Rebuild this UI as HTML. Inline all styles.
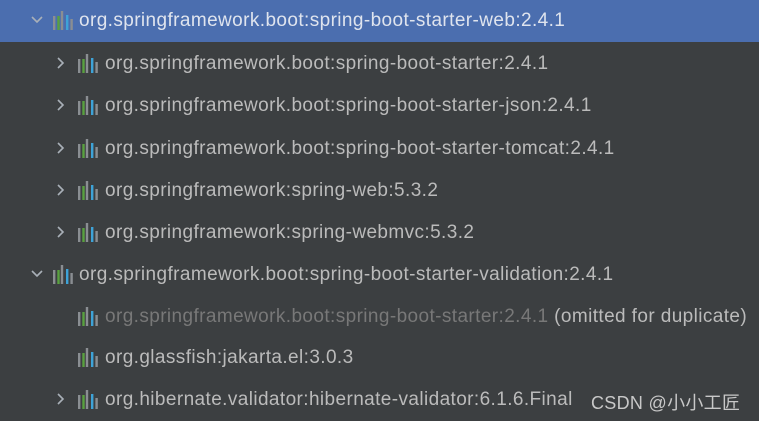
<!DOCTYPE html>
<html><head><style>
body{margin:0;width:759px;height:419px;background:#3c3f41;overflow:hidden;font-family:"Liberation Sans","Noto Sans CJK SC",sans-serif;}
.r{position:absolute;left:0;width:759px;height:42px;color:#bbbbbb;font-size:19px;letter-spacing:0.4px;}
.r.sel{background:#4b6eaf;color:#dfe4ee;top:0;}
.t{position:absolute;top:10px;white-space:nowrap;}
.ic{position:absolute;top:11px;width:20px;height:19px;}
.ch{position:absolute;top:14px;width:12px;height:12px;}
.dim{color:#787878}
.wm{position:absolute;left:591px;top:389px;color:#c8c8c8;font-size:18px;white-space:nowrap;letter-spacing:0.3px}
</style></head><body>
<svg width="0" height="0" style="position:absolute"><defs>
<g id="i"><rect x="0" y="5" width="2.4" height="14" fill="#8a8e92"/><rect x="4.3" y="5" width="2.4" height="14" fill="#59a13f"/><rect x="7.8" y="0" width="2.4" height="19" fill="#8a8e92"/><rect x="13" y="4" width="2.4" height="15" fill="#3ea3d8"/><rect x="17.4" y="8" width="2.4" height="11" fill="#8a8e92"/></g>
<path id="d" d="M1 3 L6 8 L11 3" fill="none" stroke="#a9b0b8" stroke-width="1.6"/>
<path id="rt" d="M3 1 L8 6 L3 11" fill="none" stroke="#a9b0b8" stroke-width="1.6"/>
</defs></svg>

<div class="r sel"><svg class="ch" style="left:31px"><use href="#d"/></svg><svg class="ic" style="left:53px"><use href="#i"/></svg><span class="t" style="left:79px">org.springframework.boot:spring-boot-starter-web:2.4.1</span></div>

<div class="r" style="top:43px"><svg class="ch" style="left:55px"><use href="#rt"/></svg><svg class="ic" style="left:78px"><use href="#i"/></svg><span class="t" style="left:105px">org.springframework.boot:spring-boot-starter:2.4.1</span></div>
<div class="r" style="top:85px"><svg class="ch" style="left:55px"><use href="#rt"/></svg><svg class="ic" style="left:78px"><use href="#i"/></svg><span class="t" style="left:105px">org.springframework.boot:spring-boot-starter-json:2.4.1</span></div>
<div class="r" style="top:128px"><svg class="ch" style="left:55px"><use href="#rt"/></svg><svg class="ic" style="left:78px"><use href="#i"/></svg><span class="t" style="left:105px">org.springframework.boot:spring-boot-starter-tomcat:2.4.1</span></div>
<div class="r" style="top:170px"><svg class="ch" style="left:55px"><use href="#rt"/></svg><svg class="ic" style="left:78px"><use href="#i"/></svg><span class="t" style="left:105px">org.springframework:spring-web:5.3.2</span></div>
<div class="r" style="top:212px"><svg class="ch" style="left:55px"><use href="#rt"/></svg><svg class="ic" style="left:78px"><use href="#i"/></svg><span class="t" style="left:105px">org.springframework:spring-webmvc:5.3.2</span></div>
<div class="r" style="top:254px"><svg class="ch" style="left:31px"><use href="#d"/></svg><svg class="ic" style="left:53px"><use href="#i"/></svg><span class="t" style="left:79px">org.springframework.boot:spring-boot-starter-validation:2.4.1</span></div>
<div class="r" style="top:296px"><svg class="ic" style="left:78px"><use href="#i"/></svg><span class="t" style="left:105px"><span class="dim">org.springframework.boot:spring-boot-starter:2.4.1</span> (omitted for duplicate)</span></div>
<div class="r" style="top:337px"><svg class="ic" style="left:78px"><use href="#i"/></svg><span class="t" style="left:105px">org.glassfish:jakarta.el:3.0.3</span></div>
<div class="r" style="top:379px"><svg class="ch" style="left:55px"><use href="#rt"/></svg><svg class="ic" style="left:78px"><use href="#i"/></svg><span class="t" style="left:105px">org.hibernate.validator:hibernate-validator:6.1.6.Final</span></div>
<div class="wm">CSDN @小小工匠</div>
</body></html>
